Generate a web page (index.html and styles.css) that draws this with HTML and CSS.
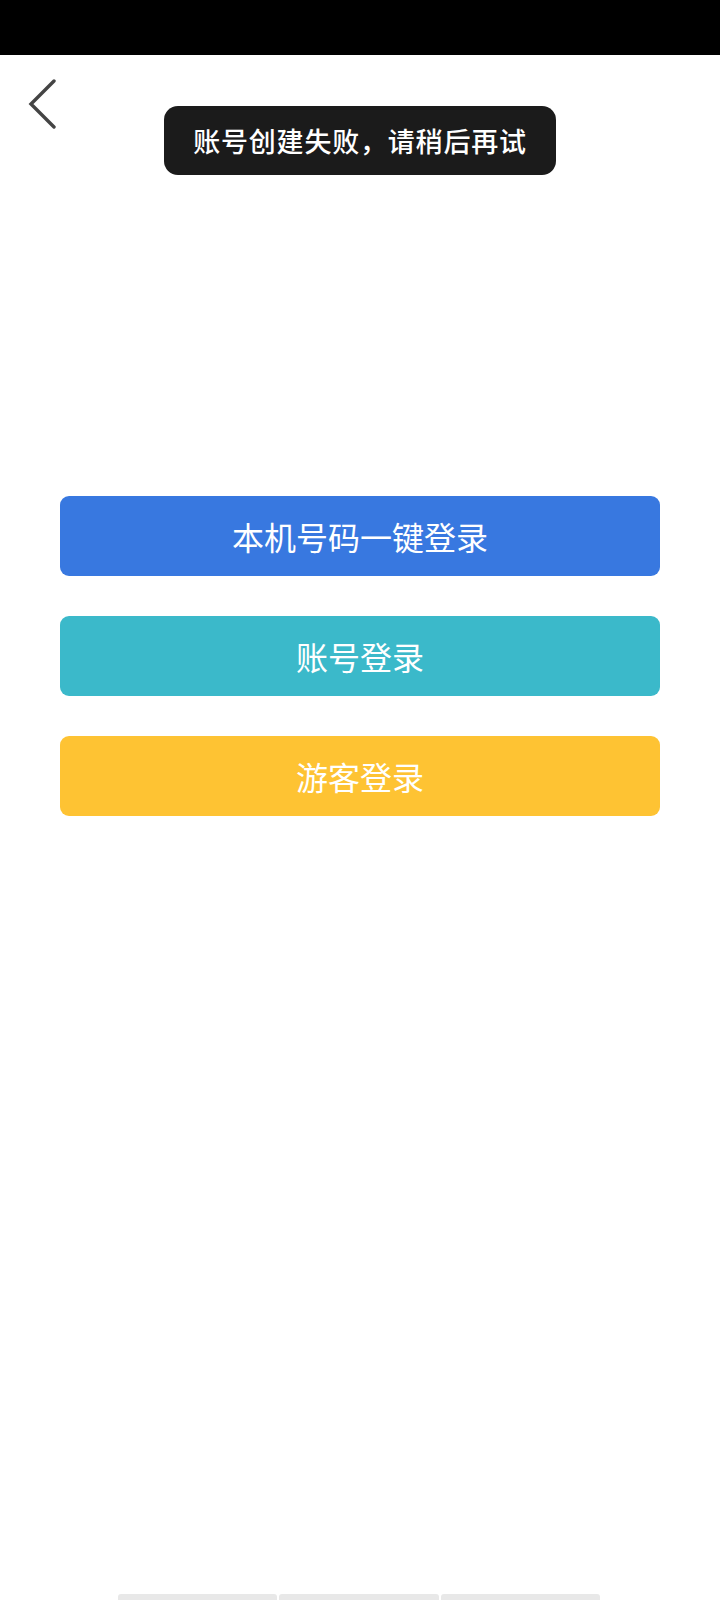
FILE: index.html
```html
<!DOCTYPE html>
<html lang="zh-CN">
  <head>
    <meta charset="UTF-8" />
    <meta name="viewport" content="width=device-width, initial-scale=1.0" />
    <title>登录</title>
    <link rel="stylesheet" href="styles.css">
  </head>
  <body>
    <div class="status-bar"></div>
    <div class="page">
      <div class="header">
        <a class="back" href="#">
          <svg width="30" height="50" viewBox="0 0 30 50">
            <polyline points="26,2 3,25 26,48" fill="none" stroke="#444" stroke-width="3.4" stroke-linecap="round" stroke-linejoin="miter" />
          </svg>
        </a>
      </div>
      <div class="toast">账号创建失败，请稍后再试</div>

      <div class="login-list">
        <button class="btn btn-phone">本机号码一键登录</button>
        <button class="btn btn-account">账号登录</button>
        <button class="btn btn-guest">游客登录</button>
      </div>

      <div class="spacer"></div>
      <div class="bottom-bar">
        <span></span>
        <span></span>
        <span></span>
      </div>
    </div>
  </body>
</html>
```

FILE: styles.css
```css
* {
  margin: 0;
  padding: 0;
  box-sizing: border-box;
  font-family: "Noto Sans CJK SC", "Noto Sans", sans-serif;
}
body {
  background: #fff;
  width: 720px;
  min-height: 1600px;
  display: flex;
  flex-direction: column;
}
.status-bar {
  height: 55px;
  background: #000;
}
.page {
  position: relative;
  flex: 1;
  display: flex;
  flex-direction: column;
}
.header {
  height: 100px;
  padding: 24px 0 0 28px;
}
.back {
  display: block;
  width: 30px;
  height: 50px;
}
.toast {
  position: absolute;
  top: 51px;
  left: 164px;
  width: 392px;
  height: 69px;
  line-height: 69px;
  text-align: center;
  background: #1b1b1b;
  color: #fff;
  border-radius: 14px;
  font-size: 27px;
  font-weight: 500;
  letter-spacing: 0.8px;
}
.login-list {
  margin-top: 341px;
  padding: 0 60px;
  display: flex;
  flex-direction: column;
  gap: 40px;
}
.btn {
  height: 80px;
  border: none;
  outline: none;
  border-radius: 9px;
  color: #fff;
  font-size: 32px;
  font-weight: 400;
  cursor: pointer;
}
.btn-phone {
  background: #3878e0;
}
.btn-account {
  background: #3bb9ca;
}
.btn-guest {
  background: #fec333;
}
.spacer {
  flex: 1;
}
.bottom-bar {
  display: flex;
  gap: 2px;
  padding: 0 120px 0 118px;
  height: 6px;
}
.bottom-bar span {
  flex: 1;
  background: #e8e8e8;
  border-radius: 3px 3px 0 0;
}
```
